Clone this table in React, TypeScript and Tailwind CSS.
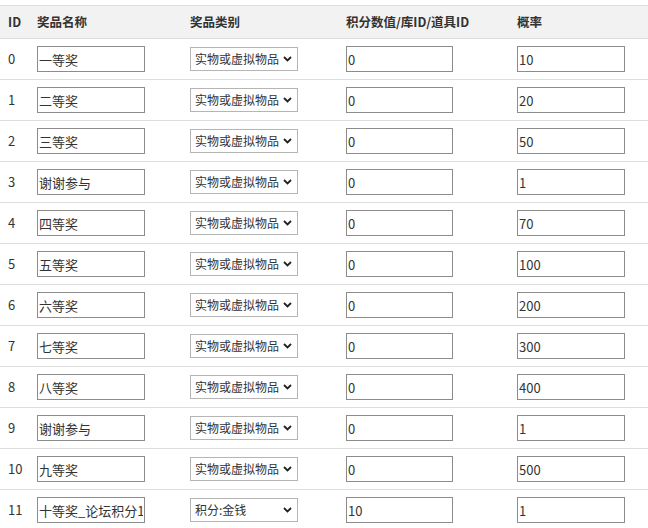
import React from "react";

const rows: [string, string, string, string, string][] = [
  ["0", "一等奖", "实物或虚拟物品", "0", "10"],
  ["1", "二等奖", "实物或虚拟物品", "0", "20"],
  ["2", "三等奖", "实物或虚拟物品", "0", "50"],
  ["3", "谢谢参与", "实物或虚拟物品", "0", "1"],
  ["4", "四等奖", "实物或虚拟物品", "0", "70"],
  ["5", "五等奖", "实物或虚拟物品", "0", "100"],
  ["6", "六等奖", "实物或虚拟物品", "0", "200"],
  ["7", "七等奖", "实物或虚拟物品", "0", "300"],
  ["8", "八等奖", "实物或虚拟物品", "0", "400"],
  ["9", "谢谢参与", "实物或虚拟物品", "0", "1"],
  ["10", "九等奖", "实物或虚拟物品", "0", "500"],
  ["11", "十等奖_论坛积分100", "积分:金钱", "10", "1"],
];

function Chevron() {
  return (
    <svg width="9" height="6" viewBox="0 0 9 6" className="absolute right-[6px] top-[9px] pointer-events-none">
      <path d="M1 1 L4.5 4.5 L8 1" fill="none" stroke="#222" strokeWidth="1.8" />
    </svg>
  );
}

export default function App() {
  const cols = "grid grid-cols-[29px_153px_156px_171px_139px] items-center";
  const inputCls =
    "h-[26px] border border-[#8c8c8c] px-[1px] outline-none text-[#333] text-[13px] bg-white";
  return (
    <div
      className="w-[648px] h-[528px] overflow-hidden bg-white pt-[5px] text-[13px] text-[#333]"
      style={{ fontFamily: '"Noto Sans CJK SC", "Noto Sans", sans-serif' }}
    >
      <div className={`${cols} h-[34px] bg-[#f2f2f2] border-y border-[#dddddd] font-bold text-[12.5px]`}>
        <div className="pl-2">ID</div>
        <div className="pl-2">奖品名称</div>
        <div className="pl-2">奖品类别</div>
        <div className="pl-2">积分数值/库ID/道具ID</div>
        <div className="pl-2">概率</div>
      </div>
      {rows.map((r) => (
        <div key={r[0]} className={`${cols} h-[41px] border-b border-[#dddddd]`}>
          <div className="pl-2">{r[0]}</div>
          <div className="pl-2">
            <input readOnly value={r[1]} className={`w-[108px] ${inputCls}`} />
          </div>
          <div className="pl-2">
            <div className="relative w-[108px] h-[24px]">
              <select
                value={r[2]}
                onChange={() => {}}
                className="appearance-none w-full h-full border border-[#b5b5b5] bg-white pl-[4px] pr-[14px] outline-none text-[#333] text-[12px]"
              >
                <option>实物或虚拟物品</option>
                <option>积分:金钱</option>
              </select>
              <Chevron />
            </div>
          </div>
          <div className="pl-2">
            <input readOnly value={r[3]} className={`w-[107px] ${inputCls}`} />
          </div>
          <div className="pl-2">
            <input readOnly value={r[4]} className={`w-[108px] ${inputCls}`} />
          </div>
        </div>
      ))}
    </div>
  );
}
